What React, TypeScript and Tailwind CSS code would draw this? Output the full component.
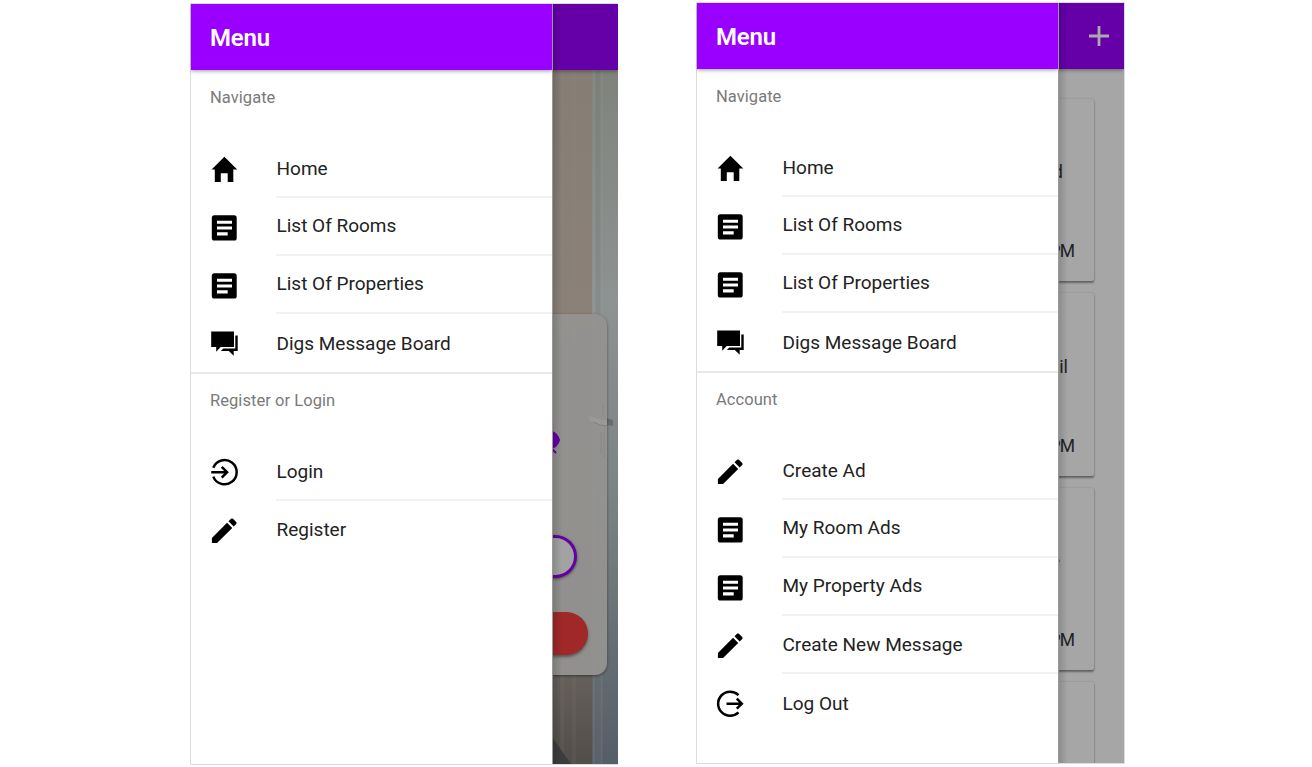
import type { ReactNode } from "react";

type IconName = "home" | "list" | "chat" | "login" | "logout" | "edit";

const drawings: Record<IconName, ReactNode> = {
  home: <path d="M12.8 29v-8.7h6.9V29h5.6V16.4h3.9L16.4 3.8 3.6 16.4h3.2V29z" fill="currentColor" />,
  list: (
    <>
      <rect x="3.8" y="4.2" width="24.9" height="25.4" rx="2.6" fill="currentColor" />
      <path d="M9 9.7h15v3.1H9zM9 15.5h15v3.1H9zM9 21.3h10.7v3.1H9z" fill="#fff" />
    </>
  ),
  chat: (
    <path
      d="M3.2 4.6H26V20H12.6l-4.4 4.7V20h-5zM27.3 8.5h2.4v15.4h-4v4.8l-4.9-4.8h-8l2.6-2.5h11.9z"
      fill="currentColor"
    />
  ),
  login: (
    <g fill="none" stroke="currentColor" strokeWidth="2.5">
      <path d="M5.3 11.8a12.1 12.1 0 1 1 0 8.8" />
      <path d="M3.2 16.2h15.6M13.7 10.8l5.4 5.4-5.4 5.4" />
    </g>
  ),
  logout: (
    <g fill="none" stroke="currentColor" strokeWidth="2.5">
      <path d="M24.5 8.1a12 12 0 1 0 0 17.2" />
      <path d="M12.5 16.7h15.2M22.8 11.7l5 5-5 5" />
    </g>
  ),
  edit: (
    <path
      transform="translate(-.2 .3) scale(1.37)"
      d="M3 17.25V21h3.75L17.81 9.94l-3.75-3.75L3 17.25zM20.71 7.04c.39-.39.39-1.02 0-1.41l-2.34-2.34c-.39-.39-1.02-.39-1.41 0l-1.83 1.83 3.75 3.75 1.83-1.83z"
      fill="currentColor"
    />
  ),
};

function Icon({ name }: { name: IconName }) {
  return (
    <svg viewBox="0 0 32 32" className="h-8 w-8 shrink-0 text-black">
      {drawings[name]}
    </svg>
  );
}

interface Item {
  icon: IconName;
  label: string;
}

function Section({ title, items }: { title: string; items: Item[] }) {
  return (
    <section>
      <h2 className="h-[69px] pt-[17px] pl-[19px] text-[16.5px] leading-5 tracking-[0.05px] text-[#7a7a7a]">{title}</h2>
      <ul>
        {items.map((item, i) => (
          <li key={item.label} className="flex h-[58px] items-center pl-[17px]">
            <Icon name={item.icon} />
            <span
              className={
                "ml-[36px] flex h-full flex-1 items-center pl-[0.5px] text-[19px] text-[#222] " +
                (i < items.length - 1 ? "border-b-2 border-[#f2f2f2] " : "") +
                (i === 1 || i === 2 ? "pt-px" : "pt-[2px]")
              }
            >
              {item.label}
            </span>
          </li>
        ))}
      </ul>
    </section>
  );
}

function Drawer({ sections }: { sections: { title: string; items: Item[] }[] }) {
  return (
    <aside className="flex w-[362px] shrink-0 flex-col border-l border-[#dcdcdc] bg-white">
      <header className="z-10 mb-px flex h-[66px] shrink-0 items-center bg-[#9900ff] pl-[19px] text-[24px] font-semibold tracking-[-0.2px] text-white shadow-[0_1px_4px_rgba(0,0,0,0.4)]">
        <span className="pt-px">Menu</span>
      </header>
      <Section {...sections[0]} />
      <div className="h-[2px] shrink-0 bg-[#e8e8e8]" />
      <Section {...sections[1]} />
    </aside>
  );
}

const navigate = {
  title: "Navigate",
  items: [
    { icon: "home", label: "Home" },
    { icon: "list", label: "List Of Rooms" },
    { icon: "list", label: "List Of Properties" },
    { icon: "chat", label: "Digs Message Board" },
  ] as Item[],
};

const guest = {
  title: "Register or Login",
  items: [
    { icon: "login", label: "Login" },
    { icon: "edit", label: "Register" },
  ] as Item[],
};

const account = {
  title: "Account",
  items: [
    { icon: "edit", label: "Create Ad" },
    { icon: "list", label: "My Room Ads" },
    { icon: "list", label: "My Property Ads" },
    { icon: "edit", label: "Create New Message" },
    { icon: "logout", label: "Log Out" },
  ] as Item[],
};

function EdgeShade() {
  return (
    <div className="absolute inset-y-0 left-0 z-20 w-2.5 border-l border-[#999] bg-linear-to-r from-black/15 to-transparent" />
  );
}

function LoginBackdrop() {
  return (
    <div className="relative flex w-[66px] flex-col overflow-hidden bg-[#858783]">
      <div className="z-10 h-[66px] shrink-0 bg-[#6500a8] shadow-[0_1px_4px_rgba(0,0,0,0.4)]" />
      <div className="relative flex-1">
        <svg viewBox="0 0 66 694" preserveAspectRatio="none" className="absolute inset-0 h-full w-full">
          <defs>
            <linearGradient id="wood" x1="0" y1="0" x2="0" y2="1">
              <stop offset="0" stopColor="#867d74" />
              <stop offset=".35" stopColor="#8b8178" />
              <stop offset=".85" stopColor="#69635e" />
              <stop offset="1" stopColor="#514d49" />
            </linearGradient>
            <linearGradient id="wall" x1="0" y1="0" x2="0" y2="1">
              <stop offset="0" stopColor="#80837c" />
              <stop offset=".33" stopColor="#8d9292" />
              <stop offset=".6" stopColor="#7d8485" />
              <stop offset="1" stopColor="#555e67" />
            </linearGradient>
            <linearGradient id="seam" x1="0" y1="0" x2="0" y2="1">
              <stop offset="0" stopColor="#6f5945" />
              <stop offset="1" stopColor="#4e4844" />
            </linearGradient>
          </defs>
          <rect width="66" height="694" fill="url(#wall)" />
          <rect width="40" height="694" fill="url(#wood)" />
          <path d="M10 0v694M22 0v694" stroke="#948a80" strokeOpacity=".1" strokeWidth="4" />
          <path d="M39.5 0v694" stroke="url(#seam)" strokeWidth="2" />
          <path d="M42 0v694M49.5 0v694" stroke="#a0a5a3" strokeOpacity=".15" strokeWidth="2" />
          <path d="M46 0v694" stroke="#6f746f" strokeOpacity=".2" strokeWidth="5" />
          <path d="M0 667l19 27H0z" fill="#3d3c3d" />
          <path d="M54 348l7 2v6l-7-1z" fill="#606767" fillOpacity=".8" />
        </svg>
        <div className="relative mt-[244px] mr-[11px] flex h-[361px] flex-col overflow-hidden rounded-r-[12px] bg-[#949290]/95 shadow-[0_1px_3px_rgba(0,0,0,0.45)]">
          <svg viewBox="0 0 55 150" className="h-[150px] w-[55px]">
            <path d="M37 101q8 5 18 5v6q-11 0-18-6z" fill="#9b9998" />
            <path d="M41 108q7 4 14 4" fill="none" stroke="#807e7d" strokeWidth="1" />
            <path d="M51 91v10M49 118v22M52 118v26" stroke="#85827f" strokeOpacity=".6" strokeWidth="1" />
            <path d="M0 118q5 2 7 8-1 4-5 7l-2-1zM0 135l4 4" fill="#6500a8" stroke="#6500a8" strokeWidth="2" />
          </svg>
          <div className="mt-[71px] h-[43px] w-[25px] rounded-r-full border-y-[3px] border-r-[3px] border-[#6500a8] bg-[#a3a2a2] shadow-[0_1px_3px_rgba(0,0,0,0.5)]" />
          <div className="mt-[34px] h-[43px] w-[36px] rounded-r-full bg-[#a02829] shadow-[0_2px_3px_rgba(0,0,0,0.4)]" />
        </div>
      </div>
      <EdgeShade />
    </div>
  );
}

function AdCard({ end, tail }: { end: string; tail: string }) {
  return (
    <div className="mr-[30.5px] flex h-[182.4px] shrink-0 flex-col items-end rounded-r-[2px] bg-[#a6a6a6] text-[18px] leading-6 text-[#222] shadow-[0_2px_2px_rgba(0,0,0,0.38),0_0_2px_rgba(0,0,0,0.2)]">
      <span className="mt-[61.4px] h-6 w-full">
        <span className={"flex justify-end " + tail}>{end}</span>
      </span>
      <span className="mt-[55px] mr-[19px] flex w-4 justify-end text-[17.5px] tracking-[-0.6px]">PM</span>
    </div>
  );
}

function AdsBackdrop() {
  return (
    <div className="relative flex w-[66px] flex-col overflow-hidden bg-[#a6a6a6]">
      <div className="z-10 flex h-[66px] shrink-0 items-center justify-end bg-[#6500a8] pr-[15.5px] shadow-[0_1px_4px_rgba(0,0,0,0.4)]">
        <svg viewBox="0 0 20 20" className="h-5 w-5">
          <path d="M10 0v20M0 10h20" stroke="#aaa" strokeWidth="2.8" />
        </svg>
      </div>
      <div className="flex min-h-0 flex-1 flex-col gap-[12px] overflow-hidden pt-[30px]">
        <AdCard end="ad" tail="w-[5px]" />
        <AdCard end="ail" tail="w-[10px]" />
        <AdCard end="e" tail="w-[2px]" />
        <AdCard end="" tail="w-0" />
      </div>
      <EdgeShade />
    </div>
  );
}

export default function App() {
  return (
    <main className="flex h-[767px] w-[1312px] items-start gap-[78px] overflow-hidden bg-white pl-[190px] font-['Roboto',sans-serif]">
      <div className="mt-[3px] flex h-[762px] w-[428px] overflow-hidden border-t border-b border-[#dcdcdc]">
        <Drawer sections={[navigate, guest]} />
        <LoginBackdrop />
      </div>
      <div className="mt-[2px] flex h-[762px] w-[429px] overflow-hidden border-t border-r border-b border-[#dcdcdc]">
        <Drawer sections={[navigate, account]} />
        <AdsBackdrop />
      </div>
    </main>
  );
}
